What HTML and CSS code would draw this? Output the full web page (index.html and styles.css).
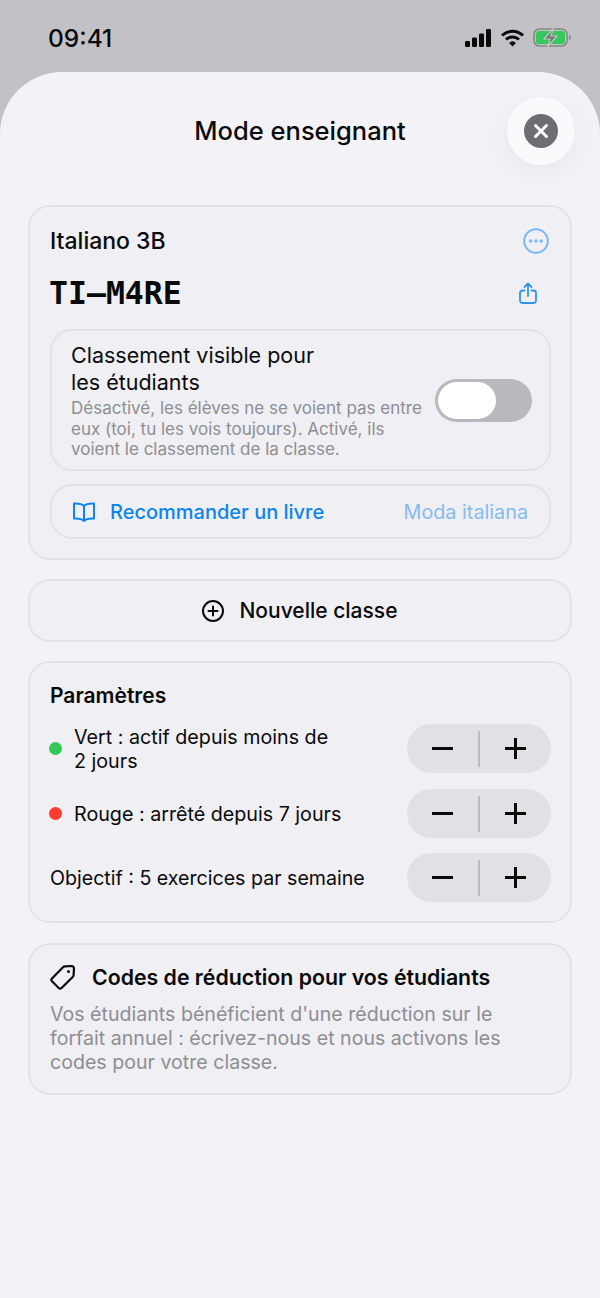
FILE: index.html
```html
<!DOCTYPE html>
<html lang="fr">
	<head>
		<meta charset="UTF-8" />
		<meta name="viewport" content="width=device-width, initial-scale=1.0" />
		<title>Mode enseignant</title>
		<link rel="stylesheet" href="styles.css">
	</head>
	<body>
		<div class="status-bar">
			<span class="time">09:41</span>
			<div class="status-icons">
				<svg width="27" height="18" viewBox="0 0 27 18" fill="#0a0a0a">
					<rect x="0" y="12" width="5" height="6" rx="1.2" />
					<rect x="7" y="8.5" width="5" height="9.5" rx="1.2" />
					<rect x="14" y="4.5" width="5" height="13.5" rx="1.2" />
					<rect x="21" y="0" width="5" height="18" rx="1.2" />
				</svg>
				<svg width="25" height="18" viewBox="0 0 24 18" fill="none" stroke="#0a0a0a" stroke-width="3">
					<path d="M1.5 6.500a15 15 0 0 1 21 0" />
					<path d="M5.500 10.500a9.500 9.500 0 0 1 13 0" />
					<path d="M12 17.500l-3.400-3.600a5 5 0 0 1 6.800 0z" fill="#0a0a0a" stroke="none" />
				</svg>
				<svg width="38" height="19" viewBox="0 0 38 19">
					<rect x="1" y="1" width="33" height="17" rx="5.500" fill="none" stroke="#7f8a80" stroke-width="1.600" />
					<rect x="3" y="3" width="29" height="13" rx="3" fill="#34c759" />
					<path d="M36 6.500c1.200.4 1.800 1.600 1.800 3s-.6 2.600-1.800 3z" fill="#7f8a80" />
					<path d="M20.500 0L11 11h6l-2.500 8L24 8h-6z" fill="#6f7a70" stroke="#c2c2c6" stroke-width="1.200" />
				</svg>
			</div>
		</div>

		<div class="sheet">
			<header class="sheet-header">
				<h1>Mode enseignant</h1>
				<a href="javascript:;" class="close-btn">
					<svg width="34" height="34" viewBox="0 0 34 34">
						<circle cx="17" cy="17" r="17" fill="#6e6e72" />
						<path d="M11.500 11.500l11 11M22.500 11.500l-11 11" stroke="#fff" stroke-width="3" stroke-linecap="round" />
					</svg>
				</a>
			</header>

			<main class="content">
				<section class="card">
					<div class="card-line">
						<h2 class="class-name">Italiano 3B</h2>
						<svg class="more-icon" width="26" height="26" viewBox="0 0 26 26" fill="none">
							<circle cx="13" cy="13" r="11.800" stroke="#79b8f3" stroke-width="2" />
							<circle cx="7.800" cy="13" r="1.700" fill="#79b8f3" />
							<circle cx="13" cy="13" r="1.700" fill="#79b8f3" />
							<circle cx="18.200" cy="13" r="1.700" fill="#79b8f3" />
						</svg>
					</div>
					<div class="card-line code-line">
						<span class="code">TI&#8211;M4RE</span>
						<svg class="share-icon" width="18" height="22" viewBox="0 0 18 22" fill="none" stroke="#2f95ea" stroke-width="1.800" stroke-linecap="round" stroke-linejoin="round">
							<path d="M5.500 8.500H3.500a2.500 2.500 0 0 0-2.500 2.500v7.500a2.500 2.500 0 0 0 2.500 2.500h11a2.500 2.500 0 0 0 2.500-2.500V11a2.500 2.500 0 0 0-2.500-2.500h-2" />
							<path d="M9 14V1.500M5.500 5L9 1.500 12.500 5" />
						</svg>
					</div>

					<div class="inner-box visible-box">
						<div class="visible-text">
							<div class="visible-title">Classement visible pour<br />les étudiants</div>
							<p class="visible-desc">Désactivé, les élèves ne se voient pas entre eux (toi, tu les vois toujours). Activé, ils voient le classement de la classe.</p>
						</div>
						<div class="toggle"><span class="knob"></span></div>
					</div>

					<a href="javascript:;" class="inner-box book-box">
						<svg width="24" height="20" viewBox="0 0 24 20" fill="none" stroke="#0d84ee" stroke-width="2" stroke-linejoin="round" stroke-linecap="round">
							<path d="M12 4C10 2 6.500 1.200 2 1.500V16.500c4.500-.3 8 .4 10 2.500 2-2.100 5.500-2.800 10-2.500V1.500C17.500 1.200 14 2 12 4zM12 4v15" />
						</svg>
						<span class="book-label">Recommander un livre</span>
						<span class="book-name">Moda italiana</span>
					</a>
				</section>

				<a href="javascript:;" class="card new-class">
					<svg width="22" height="22" viewBox="0 0 22 22" fill="none" stroke="#0a0a0a" stroke-width="2" stroke-linecap="round">
						<circle cx="11" cy="11" r="10" />
						<path d="M11 6.500v9M6.500 11h9" />
					</svg>
					<span>Nouvelle classe</span>
				</a>

				<section class="card settings">
					<h2 class="settings-title">Paramètres</h2>
					<div class="setting-row">
						<span class="dot green"></span>
						<span class="setting-label">Vert : actif depuis moins de<br />2 jours</span>
						<div class="stepper">
							<a href="javascript:;" class="step minus"></a>
							<a href="javascript:;" class="step plus"></a>
						</div>
					</div>
					<div class="setting-row">
						<span class="dot red"></span>
						<span class="setting-label">Rouge : arrêté depuis 7 jours</span>
						<div class="stepper">
							<a href="javascript:;" class="step minus"></a>
							<a href="javascript:;" class="step plus"></a>
						</div>
					</div>
					<div class="setting-row last-row">
						<span class="setting-label">Objectif : 5 exercices par semaine</span>
						<div class="stepper">
							<a href="javascript:;" class="step minus"></a>
							<a href="javascript:;" class="step plus"></a>
						</div>
					</div>
				</section>

				<section class="card promo">
					<div class="promo-head">
						<svg width="26" height="26" viewBox="0 0 26 26" fill="none" stroke="#0a0a0a" stroke-width="2.200" stroke-linejoin="round">
							<path d="M2 14.500L13 3.300a3 3 0 0 1 2-.9l6.500-.4a2.500 2.500 0 0 1 2.500 2.500l-.4 6.500a3 3 0 0 1-.9 2L11.500 24a2 2 0 0 1-2.800 0L2 17.300a2 2 0 0 1 0-2.800z" />
							<circle cx="18.500" cy="7.500" r="1.500" fill="#0a0a0a" stroke="none" />
						</svg>
						<h2>Codes de réduction pour vos étudiants</h2>
					</div>
					<p class="promo-text">Vos étudiants bénéficient d'une réduction sur le<br />forfait annuel : écrivez-nous et nous activons les<br />codes pour votre classe.</p>
				</section>
			</main>
		</div>
	</body>
</html>
```

FILE: styles.css
```css
* {
	margin: 0;
	padding: 0;
	box-sizing: border-box;
}

html,
body {
	height: 100%;
}

body {
	display: flex;
	flex-direction: column;
	background-color: #c2c2c6;
	color: #0a0a0a;
	font-family: Inter, "Liberation Sans", sans-serif;
	overflow: hidden;
}

a {
	color: inherit;
	text-decoration: none;
}

.status-bar {
	flex: 0 0 72px;
	display: flex;
	align-items: flex-start;
	justify-content: space-between;
	padding: 23px 29px 0 48px;
}

.time {
	font-size: 24.500px;
	line-height: 30px;
	font-weight: 500;
}

.status-icons {
	display: flex;
	align-items: center;
	gap: 8px;
	padding-top: 5px;
}

.sheet {
	flex: 1;
	background-color: #f2f2f7;
	border-radius: 62px 62px 0 0;
}

.sheet-header {
	position: relative;
	height: 133px;
	padding-top: 44px;
	text-align: center;
}

.sheet-header h1 {
	font-size: 25.500px;
	line-height: 30px;
	font-weight: 500;
}

.close-btn {
	position: absolute;
	top: 25px;
	right: 25px;
	width: 68px;
	height: 68px;
	display: flex;
	align-items: center;
	justify-content: center;
	background-color: #fafafd;
	border-radius: 50%;
	box-shadow: 0 8px 28px rgba(0, 0, 0, 0.05);
}

.content {
	display: flex;
	flex-direction: column;
	gap: 19px;
	padding: 0 28px;
}

.card {
	display: block;
	padding: 20px 19px 19px 20px;
	background-color: #efeff4;
	border: 2px solid #e2e2e8;
	border-radius: 22px;
}

.card-line {
	display: flex;
	align-items: center;
	justify-content: space-between;
	height: 28px;
}

.class-name {
	font-size: 23px;
	font-weight: 500;
}

.more-icon {
	margin-right: 2px;
}

.code-line {
	height: 36px;
	margin-top: 20px;
}

.code {
	margin-left: -1px;
	font-family: "DejaVu Sans Mono", "Liberation Mono", monospace;
	font-size: 31.500px;
	font-weight: 700;
}

.share-icon {
	margin-right: 14px;
}

.inner-box {
	border: 2px solid #e2e2e8;
	border-radius: 22px;
}

.visible-box {
	display: flex;
	align-items: center;
	justify-content: space-between;
	margin-top: 18px;
	padding: 11px 17px 9.500px 19px;
}

.visible-text {
	width: 354px;
}

.visible-title {
	font-size: 21.500px;
	line-height: 27px;
}

.visible-desc {
	margin-top: 2px;
	font-size: 17px;
	line-height: 20.500px;
	color: #8e8e93;
}

.toggle {
	width: 97px;
	height: 43px;
	padding: 3px;
	background-color: #b9b9bd;
	border-radius: 22px;
}

.knob {
	display: block;
	width: 58px;
	height: 37px;
	background-color: #fff;
	border-radius: 19px;
}

.book-box {
	display: flex;
	align-items: center;
	height: 55px;
	margin-top: 13px;
	padding: 0 21px 0 20px;
}

.book-label {
	margin-left: 14px;
	font-size: 20px;
	font-weight: 500;
	color: #0d84ee;
}

.book-name {
	margin-left: auto;
	font-size: 19.800px;
	color: #86bcee;
}

.new-class {
	display: flex;
	align-items: center;
	justify-content: center;
	gap: 15px;
	height: 63px;
	padding: 0;
	font-size: 21px;
	font-weight: 500;
}

.settings {
	padding-top: 20px;
}

.settings-title {
	font-size: 21px;
	line-height: 25px;
	font-weight: 600;
}

.setting-row {
	display: flex;
	align-items: center;
	margin-top: 16px;
	font-size: 19.700px;
	line-height: 24px;
}

.last-row {
	margin-top: 15px;
	font-size: 19.600px;
}

.dot {
	flex: none;
	width: 13px;
	height: 13px;
	margin: 0 12px 0 -1px;
	border-radius: 50%;
}

.green {
	background-color: #34c759;
}

.red {
	background-color: #ff3b30;
}

.stepper {
	flex: none;
	display: flex;
	align-items: center;
	width: 144px;
	height: 49px;
	margin-left: auto;
	background-color: #e0e0e5;
	border-radius: 25px;
}

.step {
	position: relative;
	flex: 1;
	height: 36px;
}

.minus {
	border-right: 2px solid #bcbcc0;
}

.step::before,
.plus::after {
	content: "";
	position: absolute;
	top: 50%;
	left: 50%;
	width: 21px;
	height: 3px;
	margin: -1.500px 0 0 -10.500px;
	background-color: #0a0a0a;
}

.plus::after {
	transform: rotate(90deg);
}

.promo {
	margin-top: 1px;
	padding-top: 17px;
}

.promo-head {
	display: flex;
	align-items: center;
	gap: 16px;
}

.promo-head h2 {
	font-size: 21.300px;
	line-height: 30px;
	font-weight: 600;
}

.promo-text {
	margin-top: 10px;
	font-size: 19.600px;
	line-height: 24px;
	color: #8e8e93;
}
```
